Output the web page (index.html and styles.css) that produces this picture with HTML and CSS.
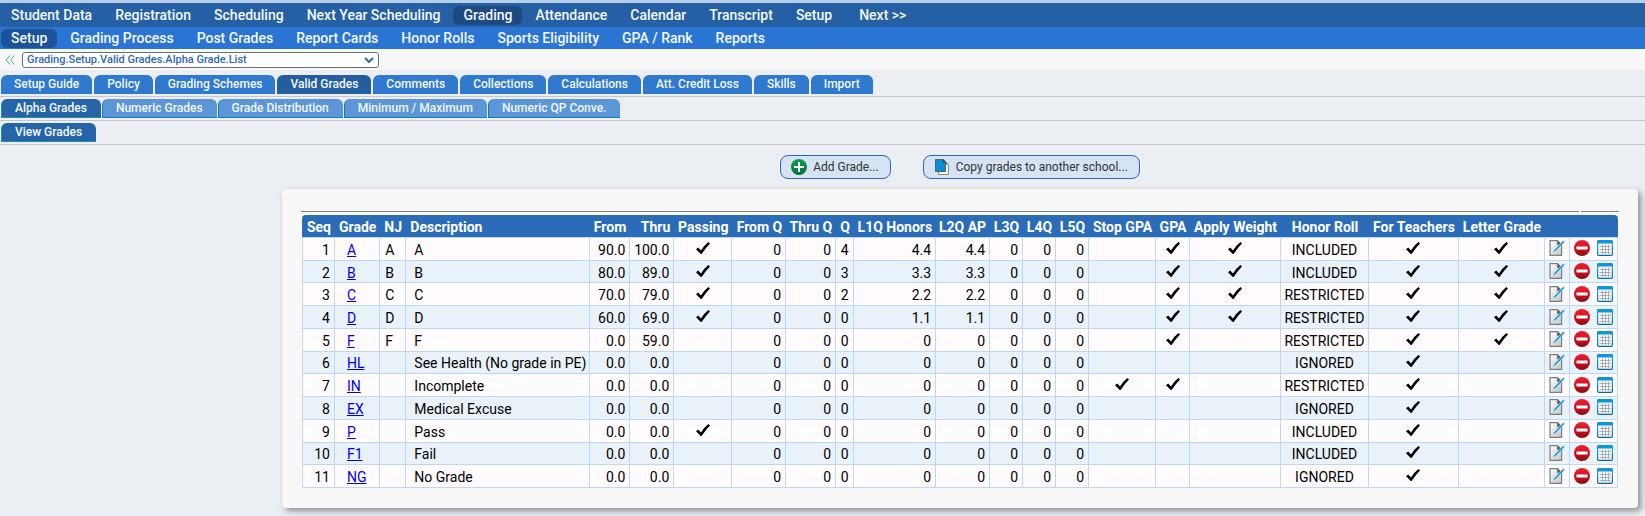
FILE: index.html
```
<!DOCTYPE html>
<html lang="en">
<head>
  <meta charset="UTF-8">
  <meta name="viewport" content="width=device-width, initial-scale=1.0">
  <title>Valid Grades</title>
  <link rel="stylesheet" href="styles.css">
</head>
<body>
  <!-- icon sprite -->
  <svg class="sprite" aria-hidden="true">
    <defs>
      <linearGradient id="paper" x1="0" y1="0" x2="1" y2="1">
        <stop offset="0" stop-color="#ffffff"/>
        <stop offset="1" stop-color="#c4c4c4"/>
      </linearGradient>
      <linearGradient id="red" x1="0" y1="0" x2="0" y2="1">
        <stop offset="0" stop-color="#ee2030"/>
        <stop offset="0.5" stop-color="#cf1220"/>
        <stop offset="1" stop-color="#8a0a12"/>
      </linearGradient>
      <linearGradient id="green" x1="0" y1="0" x2="0" y2="1">
        <stop offset="0" stop-color="#0ba04d"/>
        <stop offset="1" stop-color="#047034"/>
      </linearGradient>
      <linearGradient id="frame" x1="0" y1="0" x2="0" y2="1">
        <stop offset="0" stop-color="#35b2ea"/>
        <stop offset="1" stop-color="#04699e"/>
      </linearGradient>
    </defs>
    <symbol id="check" viewBox="0 0 14 12">
      <path d="M0 7.2 L2.2 5.6 L5 8.4 Q8 3.4 12.4 0 L14 1.4 Q9.4 6 5.6 12 L4.8 12 Z"/>
    </symbol>
    <symbol id="edit" viewBox="0 0 16 16">
      <path d="M1 .7 H8.6 L12.6 4.7 V15.3 H1 Z" fill="url(#paper)" stroke="#7d7d7d" stroke-width="1.2"/>
      <path d="M8.4 .7 V4.8 H12.6" fill="#555" stroke="#7d7d7d"/>
      <path d="M4 12.6 L5 10.2 L14.2 .4 L15.8 1.8 L6.4 11.6 Z" fill="#1c9ad8" stroke="#fff" stroke-width=".4"/>
      <path d="M3.6 13 L4.6 10.8 L5.8 12 Z" fill="#a9c3d3"/>
    </symbol>
    <symbol id="remove" viewBox="0 0 16 16">
      <circle cx="8" cy="8" r="8" fill="url(#red)"/>
      <rect x="2.4" y="6.6" width="11.2" height="2.8" rx=".6" fill="#fff"/>
    </symbol>
    <symbol id="calendar" viewBox="0 0 16 16">
      <rect x=".6" y=".6" width="14.8" height="14.8" rx="1.4" fill="#f4fbff" stroke="url(#frame)" stroke-width="1.2"/>
      <path d="M0 3.4 V1.6 Q0 0 1.6 0 H14.4 Q16 0 16 1.6 V3.4 Z" fill="#1394d6"/>
      <path d="M2.5 6.5 H13.5 M2.5 9.5 H13.5 M2.5 12.5 H13.5 M5.5 4.5 V14 M8.5 4.5 V14 M11.5 4.5 V14" stroke="#9aa0a6" stroke-width=".8"/>
    </symbol>
    <symbol id="add" viewBox="0 0 16 16">
      <circle cx="8" cy="8" r="8" fill="url(#green)"/>
      <path d="M8 3 V13 M3 8 H13" stroke="#fff" stroke-width="2"/>
    </symbol>
    <symbol id="copy" viewBox="0 0 16 16">
      <path d="M4.5 3.5 H12.4 L14.5 5.4 V15.5 H4.5 Z" fill="#fff" stroke="#8a8a8a"/>
      <path d="M10.5 1 L14 5.4 H10.5 Z" fill="#555"/>
      <path d="M1.5 .5 H9 L11.5 2.8 V12.5 H1.5 Z" fill="#0a8fd4" stroke="#4d6575"/>
      <path d="M8.6 0 L12 3.2 H8.6 Z" fill="#31424d"/>
    </symbol>
  </svg>

  <nav class="menu">
    <a href="#">Student Data</a>
    <a href="#">Registration</a>
    <a href="#">Scheduling</a>
    <a href="#">Next Year Scheduling</a>
    <a href="#" class="active">Grading</a>
    <a href="#">Attendance</a>
    <a href="#">Calendar</a>
    <a href="#">Transcript</a>
    <a href="#">Setup</a>
    <a href="#" class="next">Next &gt;&gt;</a>
  </nav>
  <nav class="menu submenu">
    <a href="#" class="active">Setup</a>
    <a href="#">Grading Process</a>
    <a href="#">Post Grades</a>
    <a href="#">Report Cards</a>
    <a href="#">Honor Rolls</a>
    <a href="#">Sports Eligibility</a>
    <a href="#">GPA / Rank</a>
    <a href="#">Reports</a>
  </nav>

  <div class="path-bar">
    <button class="collapse" aria-label="Collapse">
      <svg viewBox="0 0 10 10"><path d="M5 .5 L1 5 L5 9.5 M9.5 .5 L5.5 5 L9.5 9.5"/></svg>
    </button>
    <div class="path-select">
      <select aria-label="Page">
        <option>Grading.Setup.Valid Grades.Alpha Grade.List</option>
      </select>
      <svg class="arrow" viewBox="0 0 10 6"><path d="M1 1 L5 5 L9 1"/></svg>
    </div>
  </div>

  <nav class="tabs">
    <a href="#">Setup Guide</a>
    <a href="#">Policy</a>
    <a href="#">Grading Schemes</a>
    <a href="#" class="active">Valid Grades</a>
    <a href="#">Comments</a>
    <a href="#">Collections</a>
    <a href="#">Calculations</a>
    <a href="#">Att. Credit Loss</a>
    <a href="#">Skills</a>
    <a href="#">Import</a>
  </nav>
  <nav class="tabs tabs-light">
    <a href="#" class="active">Alpha Grades</a>
    <a href="#">Numeric Grades</a>
    <a href="#">Grade Distribution</a>
    <a href="#">Minimum / Maximum</a>
    <a href="#">Numeric QP Conve.</a>
  </nav>
  <nav class="tabs tabs-light">
    <a href="#" class="active">View Grades</a>
  </nav>

  <main>
    <div class="actions">
      <button class="action-button"><svg class="icon"><use href="#add"/></svg>Add Grade...</button>
      <button class="action-button"><svg class="icon"><use href="#copy"/></svg>Copy grades to another school...</button>
    </div>

    <div class="card">
      <div class="rule"><span></span><span></span></div>
      <table class="grades">
        <colgroup>
          <col class="w-seq"><col class="w-grade"><col class="w-nj"><col class="w-desc"><col class="w-from"><col class="w-thru">
          <col class="w-passing"><col class="w-fromq"><col class="w-thruq"><col class="w-q"><col class="w-l1q"><col class="w-l2q">
          <col class="w-lq"><col class="w-lq"><col class="w-lq"><col class="w-stop"><col class="w-gpa"><col class="w-weight">
          <col class="w-honor"><col class="w-teachers"><col class="w-letter"><col class="w-edit"><col class="w-tools">
        </colgroup>
        <thead>
          <tr>
            <th class="num">Seq</th><th>Grade</th><th>NJ</th><th>Description</th><th class="num">From</th><th class="num">Thru</th>
            <th class="mid">Passing</th><th class="num">From Q</th><th class="num">Thru Q</th><th class="mid">Q</th><th class="num">L1Q Honors</th><th class="num">L2Q AP</th>
            <th class="num">L3Q</th><th class="num">L4Q</th><th class="num">L5Q</th><th class="mid">Stop GPA</th><th class="mid">GPA</th><th class="mid">Apply Weight</th>
            <th class="mid">Honor Roll</th><th class="mid">For Teachers</th><th class="mid">Letter Grade</th><th></th><th></th>
          </tr>
        </thead>
        <tbody>
          <tr>
            <td class="num">1</td><td class="grade"><a href="#">A</a></td><td class="nj">A</td><td class="desc">A</td><td class="num">90.0</td><td class="num">100.0</td>
            <td class="mid"><svg class="check"><use href="#check"/></svg></td><td class="num">0</td><td class="num">0</td><td class="mid">4</td><td class="num">4.4</td><td class="num">4.4</td>
            <td class="num">0</td><td class="num">0</td><td class="num">0</td><td class="mid"></td><td class="mid"><svg class="check"><use href="#check"/></svg></td><td class="mid"><svg class="check"><use href="#check"/></svg></td>
            <td class="mid">INCLUDED</td><td class="mid"><svg class="check"><use href="#check"/></svg></td><td class="mid"><svg class="check"><use href="#check"/></svg></td>
            <td><div class="tools"><button aria-label="Edit"><svg class="icon"><use href="#edit"/></svg></button></div></td>
            <td><div class="tools"><button aria-label="Delete"><svg class="icon"><use href="#remove"/></svg></button><button aria-label="Calendar"><svg class="icon"><use href="#calendar"/></svg></button></div></td>
          </tr>
          <tr>
            <td class="num">2</td><td class="grade"><a href="#">B</a></td><td class="nj">B</td><td class="desc">B</td><td class="num">80.0</td><td class="num">89.0</td>
            <td class="mid"><svg class="check"><use href="#check"/></svg></td><td class="num">0</td><td class="num">0</td><td class="mid">3</td><td class="num">3.3</td><td class="num">3.3</td>
            <td class="num">0</td><td class="num">0</td><td class="num">0</td><td class="mid"></td><td class="mid"><svg class="check"><use href="#check"/></svg></td><td class="mid"><svg class="check"><use href="#check"/></svg></td>
            <td class="mid">INCLUDED</td><td class="mid"><svg class="check"><use href="#check"/></svg></td><td class="mid"><svg class="check"><use href="#check"/></svg></td>
            <td><div class="tools"><button aria-label="Edit"><svg class="icon"><use href="#edit"/></svg></button></div></td>
            <td><div class="tools"><button aria-label="Delete"><svg class="icon"><use href="#remove"/></svg></button><button aria-label="Calendar"><svg class="icon"><use href="#calendar"/></svg></button></div></td>
          </tr>
          <tr>
            <td class="num">3</td><td class="grade"><a href="#">C</a></td><td class="nj">C</td><td class="desc">C</td><td class="num">70.0</td><td class="num">79.0</td>
            <td class="mid"><svg class="check"><use href="#check"/></svg></td><td class="num">0</td><td class="num">0</td><td class="mid">2</td><td class="num">2.2</td><td class="num">2.2</td>
            <td class="num">0</td><td class="num">0</td><td class="num">0</td><td class="mid"></td><td class="mid"><svg class="check"><use href="#check"/></svg></td><td class="mid"><svg class="check"><use href="#check"/></svg></td>
            <td class="mid">RESTRICTED</td><td class="mid"><svg class="check"><use href="#check"/></svg></td><td class="mid"><svg class="check"><use href="#check"/></svg></td>
            <td><div class="tools"><button aria-label="Edit"><svg class="icon"><use href="#edit"/></svg></button></div></td>
            <td><div class="tools"><button aria-label="Delete"><svg class="icon"><use href="#remove"/></svg></button><button aria-label="Calendar"><svg class="icon"><use href="#calendar"/></svg></button></div></td>
          </tr>
          <tr>
            <td class="num">4</td><td class="grade"><a href="#">D</a></td><td class="nj">D</td><td class="desc">D</td><td class="num">60.0</td><td class="num">69.0</td>
            <td class="mid"><svg class="check"><use href="#check"/></svg></td><td class="num">0</td><td class="num">0</td><td class="mid">0</td><td class="num">1.1</td><td class="num">1.1</td>
            <td class="num">0</td><td class="num">0</td><td class="num">0</td><td class="mid"></td><td class="mid"><svg class="check"><use href="#check"/></svg></td><td class="mid"><svg class="check"><use href="#check"/></svg></td>
            <td class="mid">RESTRICTED</td><td class="mid"><svg class="check"><use href="#check"/></svg></td><td class="mid"><svg class="check"><use href="#check"/></svg></td>
            <td><div class="tools"><button aria-label="Edit"><svg class="icon"><use href="#edit"/></svg></button></div></td>
            <td><div class="tools"><button aria-label="Delete"><svg class="icon"><use href="#remove"/></svg></button><button aria-label="Calendar"><svg class="icon"><use href="#calendar"/></svg></button></div></td>
          </tr>
          <tr>
            <td class="num">5</td><td class="grade"><a href="#">F</a></td><td class="nj">F</td><td class="desc">F</td><td class="num">0.0</td><td class="num">59.0</td>
            <td class="mid"></td><td class="num">0</td><td class="num">0</td><td class="mid">0</td><td class="num">0</td><td class="num">0</td>
            <td class="num">0</td><td class="num">0</td><td class="num">0</td><td class="mid"></td><td class="mid"><svg class="check"><use href="#check"/></svg></td><td class="mid"></td>
            <td class="mid">RESTRICTED</td><td class="mid"><svg class="check"><use href="#check"/></svg></td><td class="mid"><svg class="check"><use href="#check"/></svg></td>
            <td><div class="tools"><button aria-label="Edit"><svg class="icon"><use href="#edit"/></svg></button></div></td>
            <td><div class="tools"><button aria-label="Delete"><svg class="icon"><use href="#remove"/></svg></button><button aria-label="Calendar"><svg class="icon"><use href="#calendar"/></svg></button></div></td>
          </tr>
          <tr>
            <td class="num">6</td><td class="grade"><a href="#">HL</a></td><td class="nj"></td><td class="desc">See Health (No grade in PE)</td><td class="num">0.0</td><td class="num">0.0</td>
            <td class="mid"></td><td class="num">0</td><td class="num">0</td><td class="mid">0</td><td class="num">0</td><td class="num">0</td>
            <td class="num">0</td><td class="num">0</td><td class="num">0</td><td class="mid"></td><td class="mid"></td><td class="mid"></td>
            <td class="mid">IGNORED</td><td class="mid"><svg class="check"><use href="#check"/></svg></td><td class="mid"></td>
            <td><div class="tools"><button aria-label="Edit"><svg class="icon"><use href="#edit"/></svg></button></div></td>
            <td><div class="tools"><button aria-label="Delete"><svg class="icon"><use href="#remove"/></svg></button><button aria-label="Calendar"><svg class="icon"><use href="#calendar"/></svg></button></div></td>
          </tr>
          <tr>
            <td class="num">7</td><td class="grade"><a href="#">IN</a></td><td class="nj"></td><td class="desc">Incomplete</td><td class="num">0.0</td><td class="num">0.0</td>
            <td class="mid"></td><td class="num">0</td><td class="num">0</td><td class="mid">0</td><td class="num">0</td><td class="num">0</td>
            <td class="num">0</td><td class="num">0</td><td class="num">0</td><td class="mid"><svg class="check"><use href="#check"/></svg></td><td class="mid"><svg class="check"><use href="#check"/></svg></td><td class="mid"></td>
            <td class="mid">RESTRICTED</td><td class="mid"><svg class="check"><use href="#check"/></svg></td><td class="mid"></td>
            <td><div class="tools"><button aria-label="Edit"><svg class="icon"><use href="#edit"/></svg></button></div></td>
            <td><div class="tools"><button aria-label="Delete"><svg class="icon"><use href="#remove"/></svg></button><button aria-label="Calendar"><svg class="icon"><use href="#calendar"/></svg></button></div></td>
          </tr>
          <tr>
            <td class="num">8</td><td class="grade"><a href="#">EX</a></td><td class="nj"></td><td class="desc">Medical Excuse</td><td class="num">0.0</td><td class="num">0.0</td>
            <td class="mid"></td><td class="num">0</td><td class="num">0</td><td class="mid">0</td><td class="num">0</td><td class="num">0</td>
            <td class="num">0</td><td class="num">0</td><td class="num">0</td><td class="mid"></td><td class="mid"></td><td class="mid"></td>
            <td class="mid">IGNORED</td><td class="mid"><svg class="check"><use href="#check"/></svg></td><td class="mid"></td>
            <td><div class="tools"><button aria-label="Edit"><svg class="icon"><use href="#edit"/></svg></button></div></td>
            <td><div class="tools"><button aria-label="Delete"><svg class="icon"><use href="#remove"/></svg></button><button aria-label="Calendar"><svg class="icon"><use href="#calendar"/></svg></button></div></td>
          </tr>
          <tr>
            <td class="num">9</td><td class="grade"><a href="#">P</a></td><td class="nj"></td><td class="desc">Pass</td><td class="num">0.0</td><td class="num">0.0</td>
            <td class="mid"><svg class="check"><use href="#check"/></svg></td><td class="num">0</td><td class="num">0</td><td class="mid">0</td><td class="num">0</td><td class="num">0</td>
            <td class="num">0</td><td class="num">0</td><td class="num">0</td><td class="mid"></td><td class="mid"></td><td class="mid"></td>
            <td class="mid">INCLUDED</td><td class="mid"><svg class="check"><use href="#check"/></svg></td><td class="mid"></td>
            <td><div class="tools"><button aria-label="Edit"><svg class="icon"><use href="#edit"/></svg></button></div></td>
            <td><div class="tools"><button aria-label="Delete"><svg class="icon"><use href="#remove"/></svg></button><button aria-label="Calendar"><svg class="icon"><use href="#calendar"/></svg></button></div></td>
          </tr>
          <tr>
            <td class="num">10</td><td class="grade"><a href="#">F1</a></td><td class="nj"></td><td class="desc">Fail</td><td class="num">0.0</td><td class="num">0.0</td>
            <td class="mid"></td><td class="num">0</td><td class="num">0</td><td class="mid">0</td><td class="num">0</td><td class="num">0</td>
            <td class="num">0</td><td class="num">0</td><td class="num">0</td><td class="mid"></td><td class="mid"></td><td class="mid"></td>
            <td class="mid">INCLUDED</td><td class="mid"><svg class="check"><use href="#check"/></svg></td><td class="mid"></td>
            <td><div class="tools"><button aria-label="Edit"><svg class="icon"><use href="#edit"/></svg></button></div></td>
            <td><div class="tools"><button aria-label="Delete"><svg class="icon"><use href="#remove"/></svg></button><button aria-label="Calendar"><svg class="icon"><use href="#calendar"/></svg></button></div></td>
          </tr>
          <tr>
            <td class="num">11</td><td class="grade"><a href="#">NG</a></td><td class="nj"></td><td class="desc">No Grade</td><td class="num">0.0</td><td class="num">0.0</td>
            <td class="mid"></td><td class="num">0</td><td class="num">0</td><td class="mid">0</td><td class="num">0</td><td class="num">0</td>
            <td class="num">0</td><td class="num">0</td><td class="num">0</td><td class="mid"></td><td class="mid"></td><td class="mid"></td>
            <td class="mid">IGNORED</td><td class="mid"><svg class="check"><use href="#check"/></svg></td><td class="mid"></td>
            <td><div class="tools"><button aria-label="Edit"><svg class="icon"><use href="#edit"/></svg></button></div></td>
            <td><div class="tools"><button aria-label="Delete"><svg class="icon"><use href="#remove"/></svg></button><button aria-label="Calendar"><svg class="icon"><use href="#calendar"/></svg></button></div></td>
          </tr>
        </tbody>
      </table>
    </div>
  </main>
</body>
</html>
```
FILE: styles.css
```
* {
  box-sizing: border-box;
}
body {
  margin: 0;
  font-family: Roboto, Arial, sans-serif;
  font-size: 14px;
  background: #ebeef3;
  border-top: 3px solid #b9cfe9;
  color: #000;
}
button {
  font-family: inherit;
  cursor: pointer;
}
.sprite {
  display: block;
  width: 0;
  height: 0;
}
.icon {
  width: 16px;
  height: 16px;
  display: block;
}

/* menus */
.menu {
  display: flex;
  align-items: center;
  gap: 3px;
  height: 24px;
  padding-left: 1px;
  background: #2660a4;
}
.menu a {
  padding: 0 10px;
  line-height: 19px;
  border-radius: 6px;
  color: #f4f8fd;
  font-size: 14px;
  font-weight: 500;
  text-decoration: none;
  white-space: nowrap;
}
.menu a.active {
  background: #1d4a80;
}
.menu a.next {
  margin-left: 4px;
}
.submenu {
  height: 22px;
  background: #2a74d3;
}
.submenu a.active {
  background: #1c5299;
}

/* page path */
.path-bar {
  display: flex;
  align-items: center;
  gap: 7px;
  height: 21px;
  padding-left: 5px;
  background: #f7f7f7;
}
.collapse {
  width: 10px;
  padding: 0;
  border: none;
  background: none;
}
.collapse svg {
  display: block;
  width: 10px;
  height: 10px;
  fill: none;
  stroke: #2cb5a0;
}
.path-select {
  position: relative;
  width: 357px;
}
.path-select select {
  display: block;
  width: 100%;
  height: 16px;
  padding: 0 20px 0 4px;
  border: 1px solid #6f6f6f;
  border-radius: 3px;
  background: #fff;
  color: #2c66b5;
  font-family: inherit;
  font-size: 11px;
  font-weight: 500;
  line-height: 14px;
  appearance: none;
}
.path-select .arrow {
  position: absolute;
  right: 5px;
  top: 5px;
  width: 10px;
  height: 6px;
  fill: none;
  stroke: #2c66b5;
  stroke-width: 2;
  pointer-events: none;
}

/* tabs */
.tabs {
  display: flex;
  gap: 2px;
  padding: 2px 0 2px 1px;
  border-bottom: 1px solid #c6c7c9;
}
.path-bar + .tabs {
  padding-top: 5px;
}
.tabs a {
  height: 19px;
  padding: 0 13px;
  border-radius: 6px 6px 0 0;
  background: #2f79cf;
  color: #f4f8fd;
  font-size: 12px;
  font-weight: 500;
  line-height: 18px;
  text-decoration: none;
  white-space: nowrap;
}
.tabs a.active {
  background: #245e9f;
}
.tabs-light {
  gap: 1px;
}
.tabs-light a {
  padding: 0 14px 0 13px;
  border-left: 1px solid #0f7fb5;
  border-bottom: 1px solid #0f7fb5;
  background: #5b96d8;
}
.tabs-light a.active {
  background: #2664a9;
  border-color: #2b8c9a;
}

/* content */
main {
  padding: 10px 7px 8px 282px;
}
.actions {
  display: flex;
  justify-content: center;
  gap: 32px;
  margin-bottom: 10px;
}
.action-button {
  display: flex;
  align-items: center;
  gap: 6px;
  height: 24px;
  padding: 0 11px 0 10px;
  border: 1px solid #2a68c0;
  border-radius: 8px;
  background: #d5e3f3;
  color: #333;
  font-size: 12px;
}
.card {
  padding: 22px 19px 20px;
  border-radius: 4px;
  background: #f7f7f7;
  box-shadow: 3px 3px 6px rgba(0, 0, 0, 0.4);
}
.rule {
  display: flex;
  gap: 2px;
  margin-bottom: 3px;
}
.rule span {
  flex: 1;
  height: 1px;
  background: #808080;
}
.rule span:last-child {
  flex: 0 0 38px;
}

/* grades table */
.grades {
  width: calc(100% - 2px);
  height: 273px;
  margin: 0 1px;
  border-spacing: 0;
  font-size: 14px;
  line-height: 16px;
}
.grades th {
  height: 22px;
  padding: 2px 4px 0;
  background: #2b6cb9;
  color: #fff;
  font-weight: 700;
  text-align: left;
  white-space: nowrap;
}
.grades th:first-child {
  border-top-left-radius: 4px;
}
.grades th:last-child {
  border-top-right-radius: 4px;
}
.grades td {
  padding: 2px 4px 0;
  border-right: 1px solid #bcd8f2;
  border-bottom: 1px solid #bcd8f2;
  background: #fffbff;
  white-space: nowrap;
}
.grades tr:nth-child(even) td {
  background: #e9f2f9;
}
.grades tbody tr:first-child td {
  border-top: 1px solid #bcd8f2;
}
.grades td:first-child {
  border-left: 1px solid #bcd8f2;
}
.grades .num {
  padding-left: 0;
  text-align: right;
}
.grades .mid {
  padding-left: 0;
  padding-right: 0;
  text-align: center;
}
.grades .grade {
  padding-left: 12px;
}
.grades .grade a {
  color: #0000ee;
}
.grades .nj {
  padding-left: 5px;
}
.grades .desc {
  padding-left: 8px;
  padding-right: 0;
}
.check {
  display: block;
  width: 14px;
  height: 12px;
  margin: 0 auto 4px;
}
.tools {
  display: flex;
  gap: 7px;
  margin-bottom: 3px;
}
.tools button {
  padding: 0;
  border: none;
  background: none;
}

/* column widths */
.w-seq { width: 33px; }
.w-grade { width: 45px; }
.w-nj { width: 26px; }
.w-desc { width: 184px; }
.w-from { width: 40px; }
.w-thru { width: 44px; }
.w-passing { width: 58px; }
.w-fromq { width: 54px; }
.w-thruq { width: 50px; }
.w-q { width: 18px; }
.w-l1q { width: 82px; }
.w-l2q { width: 54px; }
.w-lq { width: 33px; }
.w-stop { width: 67px; }
.w-gpa { width: 34px; }
.w-weight { width: 91px; }
.w-honor { width: 88px; }
.w-teachers { width: 90px; }
.w-letter { width: 86px; }
.w-edit { width: 25px; }
.w-tools { width: 48px; }
```
